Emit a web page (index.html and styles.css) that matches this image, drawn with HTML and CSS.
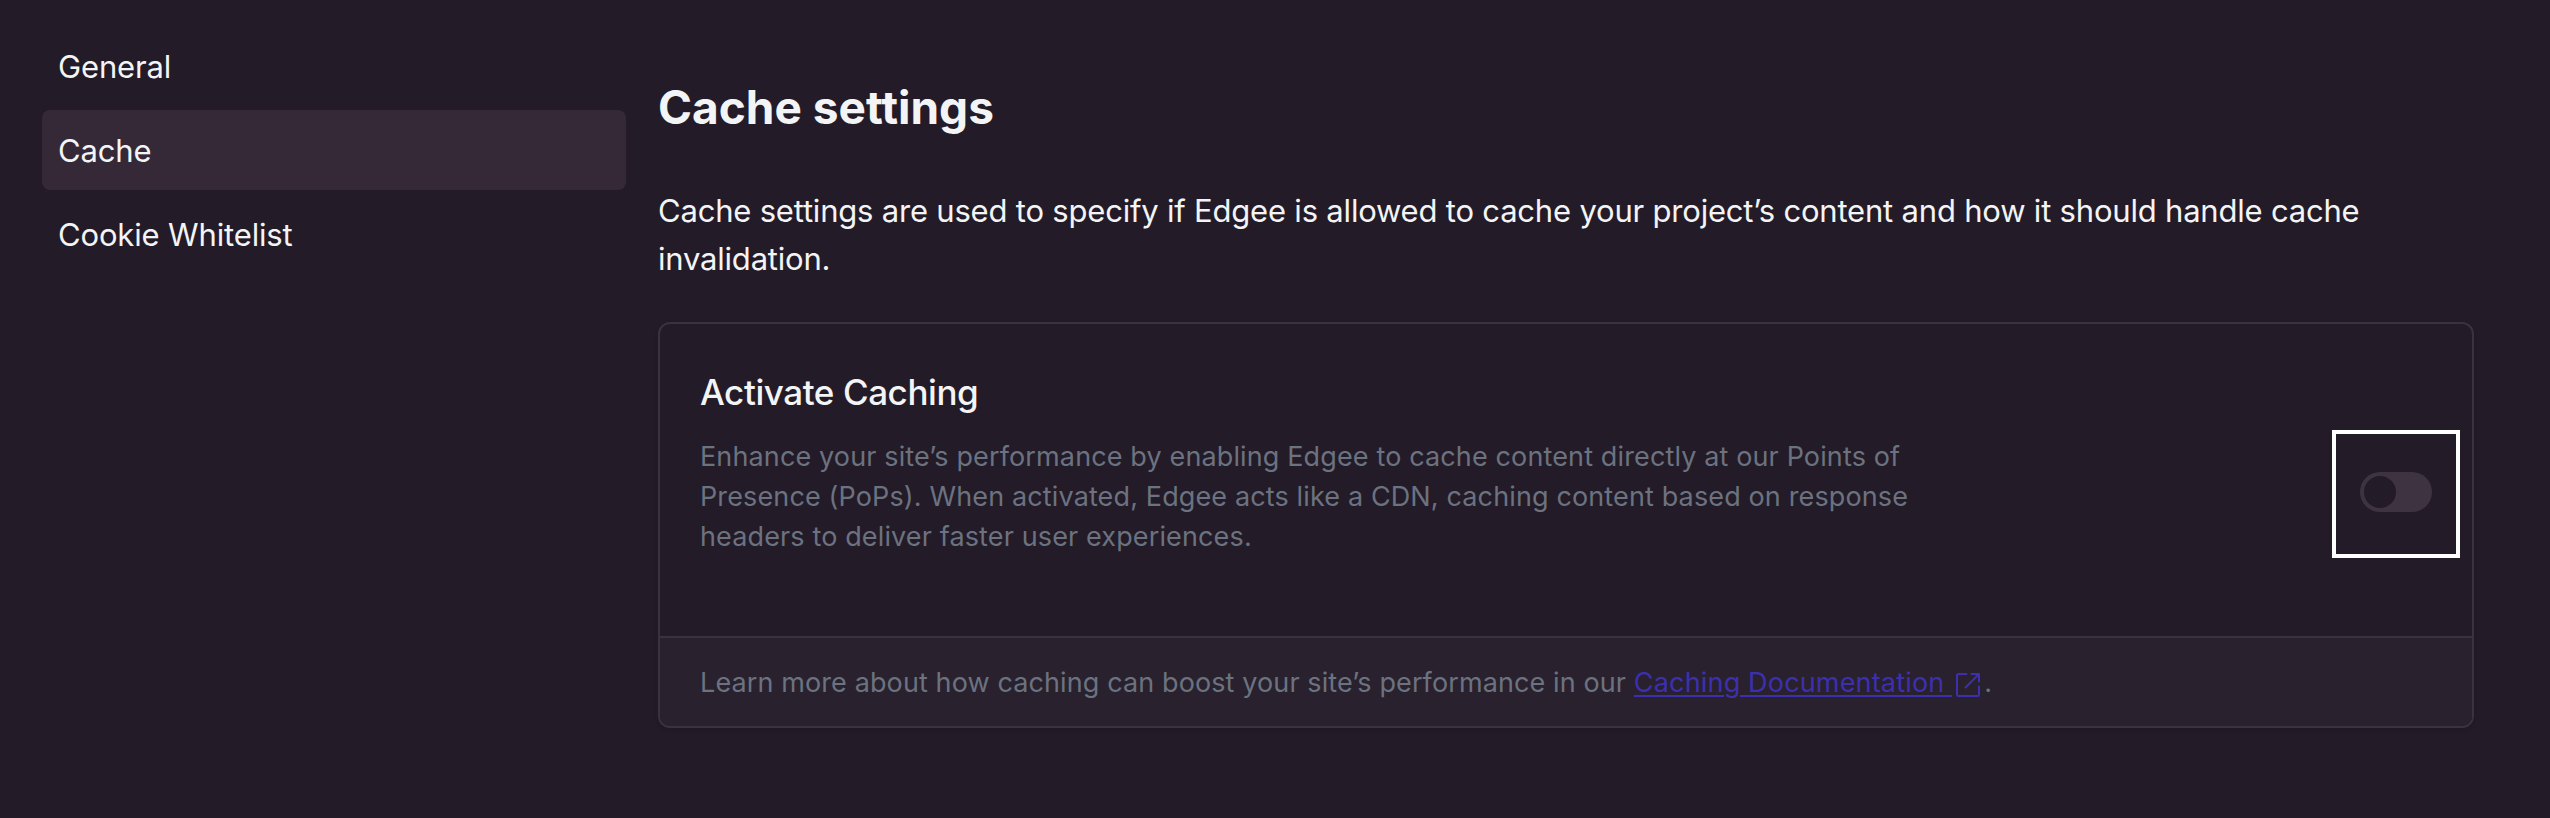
FILE: index.html
```html
<!DOCTYPE html>
<html lang="en">
<head>
<meta charset="utf-8">
<title>Cache settings</title>
<link rel="stylesheet" href="styles.css">
</head>
<body>
<div class="page">
  <nav class="sidebar">
    <a class="nav-item">General</a>
    <a class="nav-item active">Cache</a>
    <a class="nav-item">Cookie Whitelist</a>
  </nav>
  <main class="content">
    <h1 class="title">Cache settings</h1>
    <p class="intro">Cache settings are used to specify if Edgee is allowed to cache your project’s content and how it should handle cache<br>invalidation.</p>
    <section class="card">
      <div class="card-body">
        <div class="card-text">
          <h2 class="card-title">Activate Caching</h2>
          <p class="card-desc">Enhance your site’s performance by enabling Edgee to cache content directly at our Points of<br>Presence (PoPs). When activated, Edgee acts like a CDN, caching content based on response<br>headers to deliver faster user experiences.</p>
        </div>
        <div class="toggle-frame">
          <button class="toggle" role="switch" aria-checked="false" aria-label="Activate Caching"><i class="knob"></i></button>
        </div>
      </div>
      <footer class="card-footer">
        <p class="footer-text">Learn more about how caching can boost your site’s performance in our <a class="doc-link"><span class="doc-label">Caching Documentation </span><svg class="ext-icon" viewBox="0 0 24 24"><path d="M10.500 1H2.500A1.500 1.500 0 0 0 1 2.500v19A1.500 1.500 0 0 0 2.500 23h19a1.500 1.500 0 0 0 1.500-1.500v-8M15.500 1H23v7.500M23 1L9.500 14.500"/></svg></a>.</p>
      </footer>
    </section>
  </main>
</div>
</body>
</html>
```
FILE: styles.css
```css
* { box-sizing: border-box; margin: 0; padding: 0; }
body {
  background: #231b27;
  color: #f3f4f6;
  font-family: Inter, "Liberation Sans", sans-serif;
}
.page {
  display: grid;
  grid-template-columns: 584px 1816px;
  column-gap: 32px;
  height: 818px;
  padding: 26px 42px 0;
}
.sidebar { display: flex; flex-direction: column; gap: 4px; }
.nav-item {
  height: 80px;
  padding: 17px 16px 15px;
  border-radius: 8px;
  font-size: 31px;
  line-height: 48px;
  letter-spacing: -0.15px;
}
.nav-item.active { background: #352938; }
.content { padding-top: 49px; }
.title { font-size: 46px; line-height: 64px; font-weight: 700; }
.intro { margin-top: 48px; font-size: 31px; line-height: 48px; letter-spacing: -0.2px; }
.card {
  margin-top: 39px;
  height: 406px;
  display: flex;
  flex-direction: column;
  border: 2px solid #3b313f;
  border-radius: 12px;
  overflow: hidden;
  box-shadow: 0 2px 4px rgba(0, 0, 0, 0.1);
}
.card-body {
  flex: 1;
  display: flex;
  justify-content: space-between;
  padding: 40px 12px 0 40px;
}
.card-title { font-size: 35px; line-height: 56px; font-weight: 500; letter-spacing: -0.42px; }
.card-desc {
  margin-top: 17px;
  font-size: 27px;
  line-height: 40px;
  letter-spacing: 0.13px;
  color: #6b7280;
  white-space: nowrap;
}
.toggle-frame {
  width: 128px;
  height: 128px;
  margin-top: 66px;
  padding: 38px 24px;
  border: 4px solid #fff;
}
.toggle {
  display: flex;
  width: 72px;
  height: 40px;
  padding: 4px;
  border: 0;
  border-radius: 20px;
  background: #3e3341;
}
.knob { width: 32px; height: 32px; border-radius: 50%; background: #231b27; }
.card-footer {
  height: 90px;
  padding: 25px 40px 0;
  border-top: 2px solid #3b313f;
  background: #29212d;
}
.footer-text {
  font-size: 27px;
  line-height: 40px;
  letter-spacing: 0.11px;
  color: #6b7280;
  white-space: pre;
}
.doc-link { color: #3d30b0; }
.doc-label {
  letter-spacing: 0.17px;
  text-decoration: underline;
  text-decoration-thickness: 2px;
  text-underline-offset: 3px;
}
.ext-icon {
  width: 24px;
  height: 24px;
  margin: 0 4px;
  vertical-align: -5px;
  fill: none;
  stroke: currentColor;
  stroke-width: 2;
  stroke-linecap: round;
  stroke-linejoin: round;
}
```
